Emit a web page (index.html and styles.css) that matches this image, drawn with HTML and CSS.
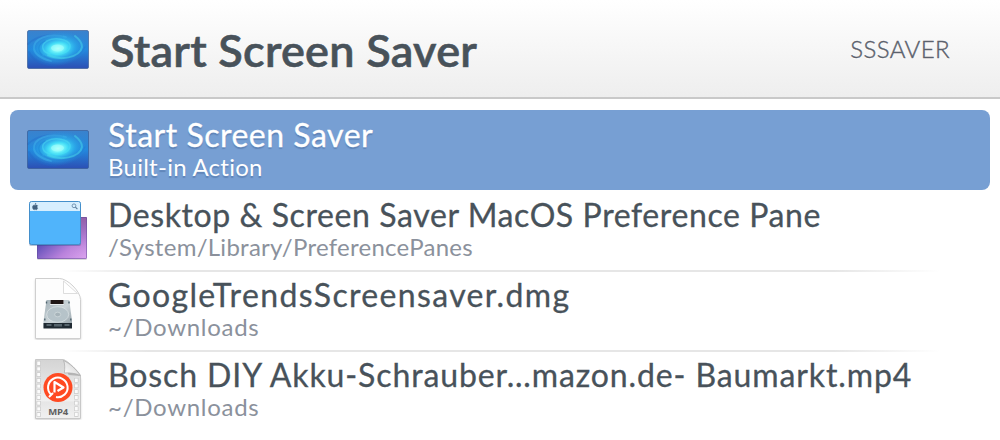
FILE: index.html
```html
<!DOCTYPE html>
<html lang="en">
<head>
<meta charset="utf-8">
<title>Launcher</title>
<link rel="stylesheet" href="styles.css">
</head>
<body>
<svg class="defs" width="0" height="0" aria-hidden="true">
  <defs>
    <linearGradient id="sky" x1="0" y1="0" x2="0" y2="1"><stop offset="0" stop-color="#3a82cd"/><stop offset=".5" stop-color="#2389de"/><stop offset="1" stop-color="#2c4fb4"/></linearGradient>
    <radialGradient id="glow"><stop offset="0" stop-color="#c4fffb"/><stop offset=".16" stop-color="#7df8fa"/><stop offset=".34" stop-color="#42dcf6"/><stop offset=".6" stop-color="#2bb0ec" stop-opacity=".7"/><stop offset="1" stop-color="#1e8fe0" stop-opacity="0"/></radialGradient>
    <symbol id="galaxy" viewBox="0 0 64 42">
      <rect x="1.500" y="1.500" width="61" height="38" rx="1.500" fill="url(#sky)"/>
      <ellipse cx="32" cy="19.500" rx="29" ry="17.500" fill="url(#glow)" transform="rotate(-8 32 19.500)"/>
      <g fill="none" stroke-linecap="round">
        <path d="M2 15c9-9 24-10 34-8M3 23c4 9 15 13 27 14" stroke="#2263c8" stroke-width="2" opacity=".3"/>
        <path d="M24 25c-8-2-10-9-3-13 8-4 21-2 23 4 1 6-7 10-15 9" stroke="#4fe2f4" stroke-width="1.500" opacity=".45"/>
        <path d="M22 26c12 6 32 3 34-8 0-4-3-8-7-11" stroke="#4ee0ec" stroke-width="2" opacity=".45"/>
        <path d="M40 8C22 3 7 10 8 20c1 6 9 10 17 12" stroke="#42b9ed" stroke-width="1.800" opacity=".45"/>
        <path d="M18 27c13 8 35 4 41-9" stroke="#2375cf" stroke-width="1.300" opacity=".4"/>
        <path d="M16 26c-5-5-4-11 3-14" stroke="#1d82d6" stroke-width="1.200" opacity=".5"/>
        <ellipse cx="31.500" cy="19" rx="6.500" ry="3.500" fill="#a5fffb" opacity=".6"/>
      </g>
      <rect x="1.500" y="1.500" width="61" height="38" rx="1.500" fill="none" stroke="#345994" stroke-opacity=".65"/>
    </symbol>
    <linearGradient id="violet" x1="0" y1="0" x2="1" y2="1"><stop offset="0" stop-color="#4b45a8"/><stop offset=".35" stop-color="#5f4fb8"/><stop offset=".7" stop-color="#b982dc"/><stop offset="1" stop-color="#dda5ef"/></linearGradient>
    <linearGradient id="mauve" x1="0" y1="0" x2="0" y2="1"><stop offset="0" stop-color="#955fa5"/><stop offset=".5" stop-color="#a675c6" stop-opacity=".5"/><stop offset="1" stop-color="#dda5ef" stop-opacity="0"/></linearGradient>
    <linearGradient id="metal" x1="0" y1="0" x2="1" y2="1"><stop offset="0" stop-color="#a0aeb5"/><stop offset=".5" stop-color="#ccd5d9"/><stop offset="1" stop-color="#8e9ba2"/></linearGradient>
    <linearGradient id="film" x1="0" y1="0" x2="0" y2="1"><stop offset="0" stop-color="#d4d4d4"/><stop offset=".7" stop-color="#f0f0f0"/><stop offset=".72" stop-color="#e6e6e6"/><stop offset="1" stop-color="#f1f1f1"/></linearGradient>
    <linearGradient id="fold" x1="0" y1="1" x2="1" y2="0"><stop offset="0" stop-color="#ffffff"/><stop offset=".5" stop-color="#e6e6e6"/><stop offset="1" stop-color="#b5b5b5"/></linearGradient>
  </defs>
</svg>

<header class="search">
  <svg class="icon" viewBox="0 0 64 42"><use href="#galaxy"/></svg>
  <h1 class="query">Start Screen Saver</h1>
  <span class="keyword">SSSAVER</span>
</header>

<main class="results">
  <article class="row row-selected">
    <svg class="icon" viewBox="0 0 64 42"><use href="#galaxy"/></svg>
    <div class="text"><div class="name name-action">Start Screen Saver</div><div class="detail detail-action">Built-in Action</div></div>
  </article>

  <article class="row">
    <svg class="icon icon-tall" viewBox="0 0 64 64">
      <rect x="11" y="20" width="50" height="42" rx="1.500" fill="#000" opacity=".15"/>
      <rect x="11" y="19" width="50" height="42" rx="1" fill="url(#violet)"/>
      <rect x="44" y="19" width="17" height="42" rx="1" fill="url(#mauve)"/>
      <rect x="11.500" y="19.500" width="49" height="41" rx="1" fill="none" stroke="#5d4a96" stroke-opacity=".5"/>
      <rect x="3" y="5" width="52" height="43" rx="2" fill="#163c78" opacity=".3"/>
      <rect x="3.500" y="3.500" width="51" height="43" rx="2" fill="#50b4fb"/>
      <path d="M3.500 13V5.500a2 2 0 0 1 2-2h47a2 2 0 0 1 2 2V13z" fill="#d6eefe"/>
      <rect x="3.500" y="3.500" width="51" height="43" rx="2" fill="none" stroke="#438fcb"/>
      <path transform="translate(0 1)" d="M9 5.600c.5-.1 1-.5 1-1.300-.8.100-1.200.6-1 1.300zm2.100 2.200c0-.6.300-.9.600-1.100-.7-.9-1.700-.6-2.500-.3-.8-.3-2.200-.5-2.600.9-.5 1.700.7 3.500 1.500 3.500.4 0 .6-.2 1.100-.2s.7.200 1.100.2c.6 0 1.100-.8 1.400-1.600-.4-.2-.6-.8-.6-1.400z" fill="#40607f" stroke="#40607f" stroke-width=".4"/>
      <circle cx="48" cy="7.800" r="1.900" fill="none" stroke="#688baa" stroke-width=".9"/><path d="m49.400 9.200 2 2" stroke="#587b9a" stroke-width="1.100"/>
    </svg>
    <div class="text"><div class="name name-pane">Desktop &amp; Screen Saver MacOS Preference Pane</div><div class="detail detail-pane">/System/Library/PreferencePanes</div></div>
  </article>

  <article class="row">
    <svg class="icon icon-tall icon-file" viewBox="0 0 64 64">
      <path class="page-shadow" d="M9.500 3h25L54.500 22v40.500h-45z" fill="#fff"/>
      <path d="M9.500 2.500h24c8 0 21 13 21 21v39h-45z" fill="#fdfdfd" stroke="#cfcfcf"/>
      <path d="M37.500 5v12.500h14z" fill="#fff" stroke="#d4d4d4" stroke-width=".8"/>
      <g transform="translate(0 .5)">
        <path d="m20.500 23.500-3 21v7h28.500v-7L43.300 23.500z" fill="url(#metal)"/>
        <path d="M17.500 46.500h28.500v5.500H17.500z" fill="#202a32"/>
        <path d="M20.500 47.500h5v2h-5zM28 47.500h8v2.500h-8zM38.500 47.500h5v2h-5z" fill="#56646c"/>
        <ellipse cx="31.700" cy="38" rx="11" ry="7.800" fill="#b6c3c9" stroke="#e3e9eb" stroke-width=".6"/>
        <ellipse cx="31.700" cy="38" rx="3" ry="2.300" fill="#a6b3b9" stroke="#dce4e6" stroke-width=".6"/>
        <path d="M24 23.500h14v5H24z" fill="#e7ecee"/><path d="M24.500 23.500h13v4h-13z" fill="#201716"/>
        <path d="M20.500 25v2M43 25v2M18.800 42v2M44.800 42v2" stroke="#50656f" stroke-width="1.400"/>
      </g>
    </svg>
    <div class="text"><div class="name name-image">GoogleTrendsScreensaver.dmg</div><div class="detail detail-folder">~/Downloads</div></div>
  </article>

  <article class="row">
    <svg class="icon icon-tall icon-file" viewBox="0 0 64 64">
      <path class="page-shadow" d="M9.500 4h25L54.500 22v40.500h-45z" fill="#fff"/>
      <path d="M9.500 3.500h28c5 2 15 12 17 16v43h-45z" fill="url(#film)" stroke="#c8c8c8"/>
      <path d="M12.700 5v56M50.300 22v39" stroke="#c6c6c6" stroke-width="4.200" stroke-dasharray="4.500 1.200"/>
      <path d="M12.700 5.600v55M50.300 22.600v38" stroke="#fbfbfb" stroke-width="3" stroke-dasharray="3.300 2.400"/>
      <path d="M37.500 4l5 15 12 1z" fill="#555" opacity=".3"/>
      <path d="M37.500 4.500c1.500 3 1.500 8 .8 12.500 6-.5 12 .5 16 2.500-4-6-10-12-16.800-15z" fill="url(#fold)" stroke="#aaa" stroke-width=".7"/>
      <circle cx="32" cy="31.500" r="14.500" fill="#ff4a22"/>
      <path d="M25 38.500a9.800 9.800 0 1 1 5 2.600M27 37l-4 4" fill="none" stroke="#fff" stroke-width="2"/>
      <path d="M28.500 36.500V26l9 5.500-6 3.500" fill="none" stroke="#fff" stroke-width="2.200" stroke-linejoin="round"/>
      <text x="32.200" y="58.700" text-anchor="middle" class="badge" textLength="20">MP4</text>
    </svg>
    <div class="text"><div class="name name-video">Bosch DIY Akku-Schrauber…mazon.de- Baumarkt.mp4</div><div class="detail detail-folder">~/Downloads</div></div>
  </article>
</main>
</body>
</html>
```
FILE: styles.css
```css
* { box-sizing: border-box; }
body {
  margin: 0;
  height: 440px;
  overflow: hidden;
  background: #fff;
  color: #48525a;
  font-family: Lato, "Noto Sans", sans-serif;
  white-space: nowrap;
}
.defs { display: block; }
.search {
  display: flex;
  align-items: center;
  height: 99px;
  padding: 0 50px 0 26px;
  border-bottom: 2px solid #c9c9c9;
  background: linear-gradient(#fff, #eee);
  text-shadow: 0 1px 1px #fff;
}
.icon { flex: none; width: 64px; height: 42px; display: block; }
.search .icon { margin-top: 3px; }
.icon-tall { height: 64px; }
.icon-file { margin-top: -2px; }
.query {
  margin: 3px 0 0 20px;
  font-size: 45px;
  line-height: 54px;
  font-weight: 600;
  letter-spacing: .25px;
  -webkit-text-stroke: .6px;
}
.keyword {
  margin: 0 0 0 auto;
  font-size: 24px;
  font-weight: 300;
  letter-spacing: .4px;
  color: #5b616c;
  -webkit-text-stroke: .4px;
}
.results { padding: 11px 10px 0; }
.row {
  display: flex;
  align-items: flex-start;
  position: relative;
  height: 80px;
  padding: 8px 16px;
  border-radius: 8px;
}
.row + .row:not(:nth-child(2))::before {
  content: "";
  position: absolute;
  left: 50px;
  right: 50px;
  top: 0;
  height: 2px;
  background: linear-gradient(90deg, transparent, #e6e6e6 10%, #e6e6e6 88%, transparent);
}
.row-selected {
  background: #779fd3;
  color: #fff;
  text-shadow: 0 2px 1px rgba(40, 70, 120, .3);
}
.row-selected .icon { margin-top: 11px; }
.text { margin: -1px 0 0 18px; }
.name { font-size: 32px; line-height: 36px; -webkit-text-stroke: .3px; }
.name-action { letter-spacing: .51px; }
.name-pane { letter-spacing: .6px; }
.name-image { letter-spacing: 1.35px; }
.name-video { letter-spacing: .89px; }
.detail { font-size: 24px; line-height: 28px; color: #8b919c; }
.detail-action { letter-spacing: .26px; }
.detail-pane { letter-spacing: .27px; }
.detail-folder { letter-spacing: .72px; }
.row-selected .detail { color: #fff; }
.page-shadow { filter: drop-shadow(0 1px 1px rgba(0, 0, 0, .25)); }
.badge { font: bold 9.500px "Open Sans", sans-serif; fill: #606060; }
```
